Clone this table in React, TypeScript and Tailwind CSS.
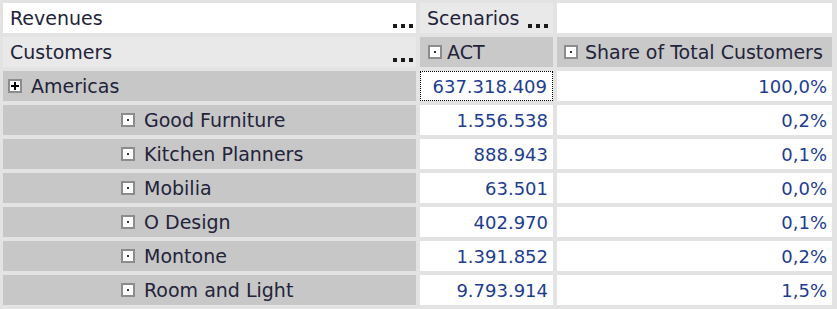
import React from "react";

type Row = { name: string; act: string; share: string };

const rows: Row[] = [
  { name: "Good Furniture", act: "1.556.538", share: "0,2%" },
  { name: "Kitchen Planners", act: "888.943", share: "0,1%" },
  { name: "Mobilia", act: "63.501", share: "0,0%" },
  { name: "O Design", act: "402.970", share: "0,1%" },
  { name: "Montone", act: "1.391.852", share: "0,2%" },
  { name: "Room and Light", act: "9.793.914", share: "1,5%" },
];

function Dots() {
  return (
    <div className="ml-auto mb-[5px] flex self-end gap-[4px]">
      <span className="block h-[4px] w-[4px] bg-[#1a1a1a]" />
      <span className="block h-[4px] w-[4px] bg-[#1a1a1a]" />
      <span className="block h-[4px] w-[4px] bg-[#1a1a1a]" />
    </div>
  );
}

function LeafBox() {
  return (
    <span className="flex h-[14px] w-[14px] shrink-0 items-center justify-center border-2 border-[#8c8c8c] bg-white">
      <span className="block h-[2px] w-[2px] bg-[#333]" />
    </span>
  );
}

function PlusBox() {
  return (
    <span className="relative flex h-[14px] w-[14px] shrink-0 items-center justify-center border-2 border-[#8c8c8c] bg-white">
      <span className="absolute h-[2px] w-[8px] bg-black" />
      <span className="absolute h-[8px] w-[2px] bg-black" />
    </span>
  );
}

const cell = "flex h-[30px] items-center";
const num = "flex h-[30px] items-center justify-end bg-white pr-[5px] text-[18px] text-[#1d3d8f]";

export default function App() {
  return (
    <div
      className="h-[309px] w-[837px] bg-[#e3e3e3] pl-[3px] pt-[3px] text-[19px] text-[#23233a]"
      style={{ fontFamily: '"DejaVu Sans", Verdana, sans-serif' }}
    >
      <div className="grid grid-cols-[413px_133px_275px] gap-x-[4px] gap-y-[4px]">
        <div className={`${cell} bg-white pl-[7px] pr-[3px]`}>
          <span>Revenues</span>
          <Dots />
        </div>
        <div className={`${cell} bg-[#e9e9e9] pl-[7px] pr-[5px]`}>
          <span>Scenarios</span>
          <Dots />
        </div>
        <div className={`${cell} bg-white`} />

        <div className={`${cell} bg-[#e9e9e9] pl-[7px] pr-[3px]`}>
          <span>Customers</span>
          <Dots />
        </div>
        <div className={`${cell} gap-[5px] bg-[#c9c9c9] pl-[8px]`}>
          <LeafBox />
          <span>ACT</span>
        </div>
        <div className={`${cell} gap-[7px] bg-[#c9c9c9] pl-[7px]`}>
          <LeafBox />
          <span className="whitespace-nowrap">Share of Total Customers</span>
        </div>

        <div className={`${cell} gap-[9px] bg-[#c7c7c7] pl-[5px]`}>
          <PlusBox />
          <span>Americas</span>
        </div>
        <div className={`${num} border border-dotted border-black pr-[4px]`}>637.318.409</div>
        <div className={num}>100,0%</div>

        {rows.map((r) => (
          <React.Fragment key={r.name}>
            <div className={`${cell} gap-[9px] bg-[#c7c7c7] pl-[118px]`}>
              <LeafBox />
              <span>{r.name}</span>
            </div>
            <div className={num}>{r.act}</div>
            <div className={num}>{r.share}</div>
          </React.Fragment>
        ))}
      </div>
    </div>
  );
}
